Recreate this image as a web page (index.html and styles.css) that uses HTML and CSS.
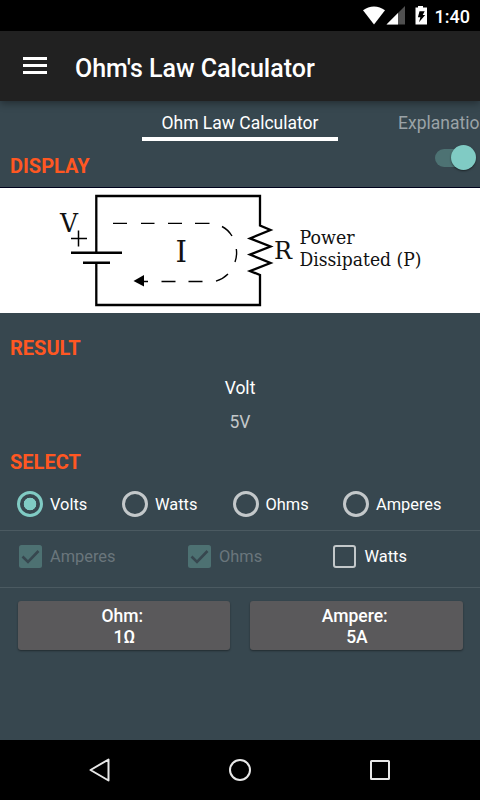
FILE: index.html
```html
<!DOCTYPE html>
<html lang="en">

<head>
    <meta charset="UTF-8">
    <meta name="viewport" content="width=device-width, initial-scale=1.0">
    <title>Ohm's Law Calculator</title>
    <link rel="stylesheet" href="styles.css">
</head>

<body>
    <div class="status-bar">
        <svg class="status-icons" width="66" height="20" viewBox="0 0 66 20">
            <path d="M0 4.3C6.4-.9 15.6-.9 22 4.3L11 18.5z" fill="#fff"/>
            <path d="M42 0v18.500H23.500z" fill="#505050"/>
            <path d="M35 7v11.500H23.500z" fill="#fff"/>
            <path d="M52.500 1.500H55V0h5v1.500h4v17H52.500z" fill="#fff"/>
            <path d="M56.500 5.200h5.200l-2 3.900h2.500l-6.200 7.200 1.400-5H54.900z" fill="#000"/>
        </svg>
        <span class="clock">1:40</span>
    </div>

    <header>
        <div class="menu-btn"><span></span><span></span><span></span></div>
        <h1>Ohm's Law Calculator</h1>
    </header>

    <nav>
        <a class="tab active"><span>Ohm Law Calculator</span></a>
        <a class="tab next"><span>Explanation</span></a>
    </nav>

    <main>
        <div class="display-head">
            <h2>DISPLAY</h2>
            <div class="switch"></div>
        </div>

        <svg class="circuit" width="480" height="125" viewBox="0 188 480 125">
            <g fill="none" stroke="#000" stroke-width="2.300">
                <path d="M96.300 253V196H260V225.500L270.500 230 250 238.500 270.500 246.500 250 254.500 270.500 263 250 271 260 275V305H96.300V262"/>
                <path d="M71 252.700H122M83 262.700H110" stroke-width="2.500"/>
                <path d="M71 238.400H87M78.500 230.500V246.500" stroke-width="1.500"/>
            </g>
            <g fill="none" stroke="#000" stroke-width="1.400">
                <path d="M113 223.400h14M141 223.400h13.500M168 223.400h14M195 223.400h14.500M222 226.500Q228 229.500 232 236M236.300 249Q237.300 255.500 235 262M228 274Q223 279 216 281.200M202.500 281.500h-14M175.500 281.500h-14M148 281.500h-6"/>
            </g>
            <path d="M133.500 281l10.500-6v11.500z"/>
            <g class="circuit-text">
                <text x="60" y="232" font-size="26" textLength="18" lengthAdjust="spacingAndGlyphs">V</text>
                <text x="175.500" y="262" font-size="29" textLength="11.500" lengthAdjust="spacingAndGlyphs">I</text>
                <text x="274" y="258.500" font-size="24" textLength="18" lengthAdjust="spacingAndGlyphs">R</text>
                <text x="299.500" y="244" font-size="18" textLength="55" lengthAdjust="spacingAndGlyphs">Power</text>
                <text x="299.500" y="265.500" font-size="18" textLength="122" lengthAdjust="spacingAndGlyphs">Dissipated (P)</text>
            </g>
        </svg>

        <h2 class="result-title">RESULT</h2>
        <div class="result">
            <p>Volt</p>
            <p class="value">5V</p>
        </div>

        <h2 class="select-title">SELECT</h2>
        <div class="row radios">
            <label class="option"><span class="radio on"></span><span class="text">Volts</span></label>
            <label class="option"><span class="radio"></span><span class="text">Watts</span></label>
            <label class="option"><span class="radio"></span><span class="text">Ohms</span></label>
            <label class="option"><span class="radio"></span><span class="text">Amperes</span></label>
        </div>
        <div class="row checks">
            <label class="option disabled">
                <svg class="box" width="23" height="23" viewBox="0 0 23 23"><rect width="23" height="23" rx="2.500"/><path d="M3.500 11.500l5.500 5.500L19.500 6"/></svg>
                <span class="text">Amperes</span>
            </label>
            <label class="option disabled">
                <svg class="box" width="23" height="23" viewBox="0 0 23 23"><rect width="23" height="23" rx="2.500"/><path d="M3.500 11.500l5.500 5.500L19.500 6"/></svg>
                <span class="text">Ohms</span>
            </label>
            <label class="option"><span class="box empty"></span><span class="text">Watts</span></label>
        </div>

        <div class="buttons">
            <button>Ohm:<br>&nbsp;1Ω</button>
            <button>Ampere:<br>&nbsp;5A</button>
        </div>
    </main>

    <footer>
        <svg width="24" height="26" viewBox="0 0 24 26"><path d="M2.500 13L20.500 2.500v21z"/></svg>
        <svg width="24" height="26" viewBox="0 0 24 26"><circle cx="12" cy="13" r="10"/></svg>
        <svg width="24" height="26" viewBox="0 0 24 26"><rect x="3" y="4" width="18" height="18" rx=".5"/></svg>
    </footer>
</body>

</html>
```
FILE: styles.css
```css
* {
    box-sizing: border-box;
}

body {
    font-family: Roboto, sans-serif;
    background-color: #37474f;
    color: #fff;
    margin: 0;
    width: 480px;
    height: 800px;
    overflow: hidden;
    display: flex;
    flex-direction: column;
}

h1,
h2,
p {
    margin: 0;
}

.status-bar {
    height: 31px;
    background-color: #000;
    display: flex;
    justify-content: flex-end;
    align-items: center;
    padding-right: 10px;
}

.status-icons {
    margin-right: 6px;
}

.clock {
    font-size: 18px;
    font-weight: 500;
    line-height: 31px;
    padding-top: 2px;
}

header {
    height: 70px;
    background-color: #212121;
    display: flex;
    align-items: center;
    padding-left: 23px;
    box-shadow: 0 2px 8px rgba(0, 0, 0, 0.4);
}

.menu-btn {
    width: 24px;
    display: flex;
    flex-direction: column;
    gap: 4px;
    margin: 0 28px 1px 0;
}

.menu-btn span {
    height: 3px;
    background-color: #fff;
}

h1 {
    font-size: 25px;
    font-weight: 500;
    line-height: 30px;
    padding-top: 5px;
}

nav {
    height: 41px;
    display: flex;
    padding-left: 142px;
    font-size: 17.5px;
    line-height: 21px;
    white-space: nowrap;
}

.tab {
    flex-shrink: 0;
    padding-top: 12px;
    text-align: center;
}

.tab.active {
    width: 196px;
    height: 40px;
    border-bottom: 4px solid #fff;
}

.tab.next {
    margin-left: 60px;
    color: #9ba3a7;
}

h2 {
    font-size: 20px;
    font-weight: 700;
    line-height: 24px;
    color: #ff5722;
    padding-left: 10px;
}

.display-head {
    height: 46px;
    display: flex;
    justify-content: space-between;
    padding: 12px 4px 0 0;
    border-bottom: 1px solid #00031c;
}

.switch {
    width: 36px;
    height: 18px;
    margin: -5px 5px 0 0;
    border-radius: 9px;
    background-color: #4d7273;
    position: relative;
}

.switch::after {
    content: "";
    position: absolute;
    right: -5px;
    top: -4px;
    width: 25px;
    height: 25px;
    border-radius: 50%;
    background-color: #80cbc4;
    box-shadow: 0 1px 2px rgba(0, 0, 0, 0.5);
}

.circuit {
    display: block;
    background-color: #fff;
}

.circuit-text {
    font-family: "DejaVu Serif", serif;
    fill: #111;
}

.result-title {
    margin-top: 23px;
}

.result {
    text-align: center;
    font-size: 17.5px;
    line-height: 22px;
    padding-top: 17px;
}

.result .value {
    color: #c3c8ca;
    margin-top: 12px;
}

.select-title {
    margin-top: 17px;
}

.row {
    display: flex;
    align-items: center;
    padding-left: 17px;
    font-size: 16.4px;
    line-height: 22px;
}

.option {
    display: flex;
    align-items: center;
}

.text {
    padding-top: 2px;
}

.radios {
    height: 57px;
    padding-top: 4px;
    border-bottom: 1px solid #4b5a61;
}

.radios .option:nth-child(1) {
    width: 105px;
}

.radios .option:nth-child(2),
.radios .option:nth-child(3) {
    width: 110.5px;
}

.radio {
    width: 26px;
    height: 26px;
    margin-right: 7px;
    border: 3px solid #c3c8ca;
    border-radius: 50%;
}

.radio.on {
    border-color: #80cbc4;
    background: radial-gradient(circle, #80cbc4 6px, transparent 6.6px);
}

.checks {
    height: 57px;
    padding-left: 18.5px;
    padding-bottom: 6px;
    border-bottom: 1px solid #4b5a61;
}

.checks .option:nth-child(1) {
    width: 169px;
}

.checks .option:nth-child(2) {
    width: 145.5px;
}

.box {
    width: 23px;
    height: 23px;
    margin-right: 8.5px;
}

.box rect {
    fill: #4d7172;
}

.box path {
    fill: none;
    stroke: #37474f;
    stroke-width: 2.6;
}

.box.empty {
    border: 2.5px solid #c3c8ca;
    border-radius: 3px;
}

.disabled {
    color: #6a767c;
}

.buttons {
    display: flex;
    gap: 20px;
    padding: 13px 17.5px 0;
}

button {
    flex: 1;
    height: 49px;
    padding: 2px 3px 0 0;
    border: none;
    border-radius: 3px;
    background-color: #5a595b;
    color: #fff;
    font-family: Roboto, sans-serif;
    font-size: 17.5px;
    font-weight: 500;
    line-height: 21px;
    box-shadow: 0 1px 2px rgba(0, 0, 0, 0.4);
}

footer {
    height: 60px;
    margin-top: auto;
    background-color: #000;
    display: flex;
    justify-content: space-between;
    align-items: center;
    padding: 0 88px;
}

footer svg {
    fill: none;
    stroke: #e8e8e8;
    stroke-width: 2;
    stroke-linejoin: round;
}
```
